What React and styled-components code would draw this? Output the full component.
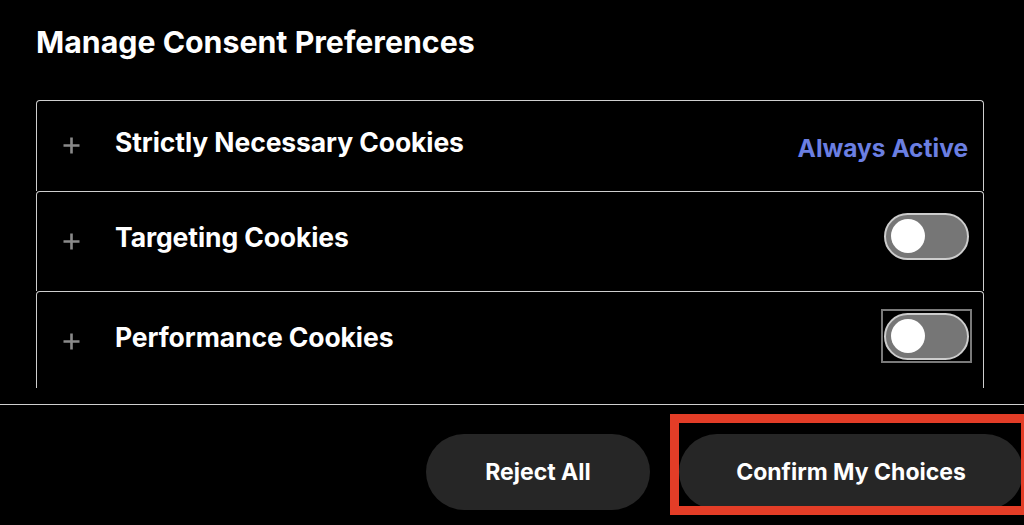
import styled, { createGlobalStyle } from "styled-components";

const GlobalStyle = createGlobalStyle`
  body {
    margin: 0;
    padding: 0;
    background: #000;
    font-family: 'Inter', 'Liberation Sans', sans-serif;
    color: #fff;
  }
`;

const categories = [
  { name: "Strictly Necessary Cookies", always: true, height: 91 },
  { name: "Targeting Cookies", height: 100 },
  { name: "Performance Cookies", height: 100, focused: true },
];

function PlusIcon() {
  return (
    <svg width="19" height="19" viewBox="0 0 19 19">
      <path d="M9.5 1.5v16M1.5 9.5h16" stroke="#8a8a8a" strokeWidth="2.6" />
    </svg>
  );
}

function App() {
  return (
    <Page>
      <GlobalStyle />
      <Main>
        <Title>Manage Consent Preferences</Title>
        <List>
          {categories.map((c) => (
            <Row key={c.name} $height={c.height}>
              <Expand>
                <PlusIcon />
              </Expand>
              <RowTitle>{c.name}</RowTitle>
              {c.always ? (
                <Always>Always Active</Always>
              ) : (
                <ToggleFrame $focused={c.focused}>
                  <Toggle>
                    <Knob />
                  </Toggle>
                </ToggleFrame>
              )}
            </Row>
          ))}
        </List>
      </Main>
      <Footer>
        <Button>Reject All</Button>
        <Button $wide>Confirm My Choices</Button>
        <Highlight />
      </Footer>
    </Page>
  );
}

export default App;

const Page = styled.div`
  width: 1024px;
  height: 525px;
  overflow: hidden;
  display: flex;
  flex-direction: column;
`;

const Main = styled.div`
  height: 404px;
  padding: 24px 40px 0 36px;
  box-sizing: border-box;
  display: flex;
  flex-direction: column;
`;

const Title = styled.h2`
  margin: 0 0 40px;
  font-size: 30.3px;
  line-height: 36px;
  font-weight: 700;
`;

const List = styled.div`
  height: 288px;
  overflow: hidden;
`;

const Row = styled.div`
  height: ${(p) => p.$height}px;
  box-sizing: border-box;
  border: 1.5px solid #cfcfcf;
  border-bottom: none;
  border-radius: 4px 4px 0 0;
  display: flex;
  align-items: center;
  padding: 0 11px 9px 25px;
`;

const Expand = styled.div`
  width: 19px;
  height: 19px;
  margin-top: 8px;
  display: flex;
`;

const RowTitle = styled.div`
  flex: 1;
  margin-left: 34px;
  font-size: 26.5px;
  line-height: 32px;
  font-weight: 700;
  letter-spacing: -0.1px;
`;

const Always = styled.div`
  margin: 13px 4px 0 0;
  color: #6b7fe2;
  font-size: 24.5px;
  font-weight: 700;
`;

const ToggleFrame = styled.div`
  padding: 1.5px 1px;
  margin-bottom: 2px;
  border: 2px solid ${(p) => (p.$focused ? "#7a7a7a" : "transparent")};
`;

const Toggle = styled.div`
  width: 85px;
  height: 47px;
  box-sizing: border-box;
  border: 2px solid #cdcdcd;
  border-radius: 24px;
  background: #767676;
  display: flex;
  align-items: center;
  padding-left: 5px;
`;

const Knob = styled.div`
  width: 34px;
  height: 34px;
  border-radius: 50%;
  background: #fff;
`;

const Footer = styled.div`
  position: relative;
  flex: 1;
  border-top: 1.5px solid #cfcfcf;
  display: flex;
  justify-content: flex-end;
  align-items: flex-start;
  gap: 29px;
  padding: 29px 1px 0 0;
`;

const Button = styled.button`
  width: ${(p) => (p.$wide ? 344 : 224)}px;
  height: 76px;
  border: none;
  border-radius: 38px;
  background: #262626;
  color: #fff;
  font-family: 'Inter', 'Liberation Sans', sans-serif;
  font-size: 23px;
  font-weight: 700;
`;

const Highlight = styled.div`
  position: absolute;
  left: 670px;
  top: 9px;
  width: 360px;
  height: 101px;
  box-sizing: border-box;
  border: 9px solid #e33d27;
  pointer-events: none;
`;
